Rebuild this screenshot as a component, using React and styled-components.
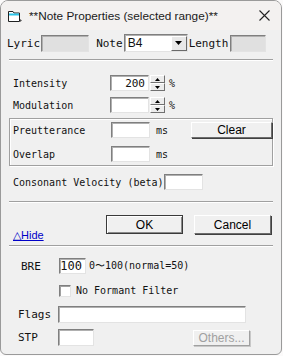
import React from "react";
import styled, { createGlobalStyle } from "styled-components";

const Global = createGlobalStyle`
  html, body { margin: 0; padding: 0; background: #fbfafa; }
  body { width: 283px; height: 356px; overflow: hidden; }
`;

const mono = `"DejaVu Sans Mono", "Liberation Mono", monospace`;
const ui = `"Liberation Sans", "Noto Sans", Arial, sans-serif`;

const Window = styled.div`
  box-sizing: border-box;
  width: 282px;
  height: 355px;
  background: #f0f0f0;
  border: 1px solid #9a9a9a;
  border-radius: 8px 8px 6px 6px;
  overflow: hidden;
  display: flex;
  flex-direction: column;
`;

const TitleBar = styled.div`
  height: 29px;
  flex: none;
  display: flex;
  align-items: center;
  background: #f3f1f0;
  padding-left: 6px;
  font-family: ${ui};
  font-size: 11.8px;
  color: #1a1a1a;
`;

const Title = styled.span`
  margin-left: 6px;
  flex: 1;
`;

const Close = styled.div`
  width: 34px;
  display: flex;
  justify-content: center;
`;

const Body = styled.div`
  padding: 4px 8px 0 6px;
  font-family: ${mono};
  font-size: 10px;
  color: #111;
`;

const Row = styled.div`
  display: flex;
  align-items: center;
  height: ${(p) => p.h || 18}px;
  margin-top: ${(p) => p.mt || 0}px;
  padding-left: ${(p) => p.pl || 0}px;
`;

const Label = styled.span`
  width: ${(p) => (p.w ? p.w + "px" : "auto")};
  flex: none;
  font-size: ${(p) => p.fs || 10}px;
  margin-right: ${(p) => p.mr || 0}px;
  white-space: nowrap;
`;

const Field = styled.div`
  box-sizing: border-box;
  width: ${(p) => p.w}px;
  height: ${(p) => p.h || 17}px;
  flex: none;
  background: ${(p) => (p.ro ? "#e0e0e0" : "#fff")};
  border-style: solid;
  border-width: 1px;
  border-color: #7f7f7f #e3e3e3 #e3e3e3 #7f7f7f;
  box-shadow: inset 1px 1px 0 #b0b0b0;
  font-size: ${(p) => p.fs || 11}px;
  display: flex;
  align-items: center;
  justify-content: ${(p) => (p.right ? "flex-end" : "flex-start")};
  padding: 0 3px;
  margin-right: ${(p) => p.mr || 0}px;
`;

const Select = styled(Field)`
  padding: 0 0 0 3px;
  justify-content: space-between;
  font-family: ${ui};
  font-size: 12px;
`;

const DropBtn = styled.div`
  width: 16px;
  height: 15px;
  box-sizing: border-box;
  background: #e8e8e8;
  border: 1px solid;
  border-color: #fff #6a6a6a #6a6a6a #fff;
  display: flex;
  align-items: center;
  justify-content: center;
`;

const Spin = styled.div`
  display: flex;
  flex-direction: column;
  margin: 0 4px 0 1px;
`;

const SpinBtn = styled.div`
  width: 15px;
  height: 8px;
  box-sizing: border-box;
  background: #ececec;
  border: 1px solid;
  border-color: #fff #707070 #707070 #fff;
  display: flex;
  align-items: center;
  justify-content: center;
`;

const Sep = styled.div`
  height: 0;
  border-top: 1px solid #a0a0a0;
  border-bottom: 1px solid #fff;
  margin: ${(p) => p.m || "0"};
`;

const Group = styled.div`
  border: 1px solid #a0a0a0;
  box-shadow: 1px 1px 0 #fff, inset 1px 1px 0 #fff;
  padding: 3px 0 3px 3px;
  margin: 5px 0 0 2px;
`;

const Button = styled.div`
  box-sizing: border-box;
  width: ${(p) => p.w}px;
  height: ${(p) => p.h || 18}px;
  font-family: ${ui};
  font-size: 12px;
  color: ${(p) => (p.disabled ? "#a0a0a0" : "#000")};
  background: #f0f0f0;
  border: 1px solid;
  border-color: ${(p) =>
    p.primary ? "#3a3a3a" : p.disabled ? "#fff #a0a0a0 #a0a0a0 #fff" : "#fff #6d6d6d #6d6d6d #fff"};
  box-shadow: ${(p) =>
    p.primary
      ? "inset 1px 1px 0 #fff, inset -1px -1px 0 #8a8a8a"
      : p.disabled
      ? "1px 1px 0 #c8c8c8"
      : "1px 1px 0 #404040"};
  display: flex;
  align-items: center;
  justify-content: center;
  margin-left: ${(p) => p.ml || 0}px;
`;

const HideLink = styled.a`
  font-family: ${ui};
  font-size: 11px;
  line-height: 12px;
  color: #0000c8;
  text-decoration: underline;
  display: block;
  width: max-content;
  margin: -5px 0 0 6px;
`;

const Check = styled.div`
  width: 12px;
  height: 12px;
  box-sizing: border-box;
  background: #fff;
  border: 1px solid;
  border-color: #7f7f7f #e3e3e3 #e3e3e3 #7f7f7f;
  box-shadow: inset 1px 1px 0 #a0a0a0;
  margin-right: 5px;
`;

const Arrow = ({ up, size = 5 }) => (
  <svg width={size + 2} height={Math.ceil(size / 2) + 1} viewBox="0 0 7 4">
    <path d={up ? "M3.5 0 L7 4 L0 4 Z" : "M0 0 L7 0 L3.5 4 Z"} fill="#000" />
  </svg>
);

const TitleIcon = () => (
  <svg width="16" height="14" viewBox="0 0 16 14">
    <path d="M1.5 2.5 H6 L7 4 H12.5 V12.5 H1.5 Z" fill="#fff" stroke="#222" />
    <rect x="2" y="4.5" width="10" height="2" fill="#2bc4e8" />
    <path d="M13 10 L15 11.5 L13 13 Z" fill="#555" />
  </svg>
);

const SpinBox = ({ value }) => (
  <>
    <Field w={39} h={16} right fs={11}>{value}</Field>
    <Spin>
      <SpinBtn><Arrow up size={3} /></SpinBtn>
      <SpinBtn><Arrow size={3} /></SpinBtn>
    </Spin>
    <span>%</span>
  </>
);

export default function App() {
  return (
    <>
      <Global />
      <Window>
        <TitleBar>
          <TitleIcon />
          <Title>**Note Properties (selected range)**</Title>
          <Close>
            <svg width="11" height="11" viewBox="0 0 11 11">
              <path d="M0.5 0.5 L10.5 10.5 M10.5 0.5 L0.5 10.5" stroke="#222" strokeWidth="1.1" />
            </svg>
          </Close>
        </TitleBar>
        <Body>
          <Row mt={0}>
            <Label fs={11} mr={1}>Lyric</Label>
            <Field w={48} ro mr={7} />
            <Label fs={11} mr={1}>Note</Label>
            <Select w={64} h={18} mr={1}>
              B4
              <DropBtn><Arrow size={5} /></DropBtn>
            </Select>
            <Label fs={11} mr={2}>Length</Label>
            <Field w={36} ro />
          </Row>
          <Sep m="7px 0 0 2px" />
          <Row mt={14} h={16} pl={6}>
            <Label w={97}>Intensity</Label>
            <SpinBox value="200" />
          </Row>
          <Row mt={6} h={16} pl={6}>
            <Label w={97}>Modulation</Label>
            <SpinBox value="" />
          </Row>
          <Group>
            <Row h={16}>
              <Label w={98}>Preutterance</Label>
              <Field w={39} h={16} mr={6} />
              <span>ms</span>
              <Button w={82} h={16} ml={23}>Clear</Button>
            </Row>
            <Row h={16} mt={8}>
              <Label w={98}>Overlap</Label>
              <Field w={39} h={16} mr={6} />
              <span>ms</span>
            </Row>
          </Group>
          <Row mt={8} h={16} pl={6}>
            <Label>Consonant Velocity (beta)</Label>
            <Field w={39} h={16} />
          </Row>
          <Sep m="11px 0 0 2px" />
          <Row mt={12} h={19} pl={99}>
            <Button w={77} h={19} primary>OK</Button>
            <Button w={77} h={19} ml={11}>Cancel</Button>
          </Row>
          <HideLink>△Hide</HideLink>
          <Sep m="4px 0 0 2px" />
          <Row mt={11} h={16} pl={14}>
            <Label w={38} fs={11}>BRE</Label>
            <Field w={27} h={16} right fs={12} mr={3}>100</Field>
            <Label>0〜100(normal=50)</Label>
          </Row>
          <Row mt={10} h={13} pl={52}>
            <Check />
            <Label>No Formant Filter</Label>
          </Row>
          <Row mt={9} h={17} pl={11}>
            <Label w={40} fs={11}>Flags</Label>
            <Field w={188} h={17} />
          </Row>
          <Row mt={6} h={17} pl={11}>
            <Label w={40} fs={11}>STP</Label>
            <Field w={36} h={17} />
            <Button w={57} h={16} ml={99} disabled>Others...</Button>
          </Row>
        </Body>
      </Window>
    </>
  );
}
